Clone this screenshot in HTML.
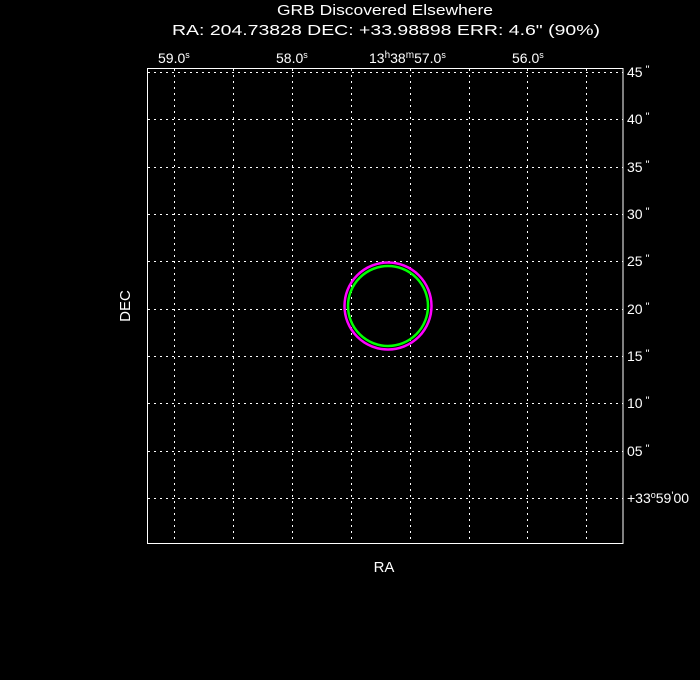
<!DOCTYPE html>
<html><head><style>html,body{margin:0;padding:0;background:#000;}svg{display:block}</style></head>
<body>
<svg width="700" height="680" xmlns="http://www.w3.org/2000/svg" font-family="Liberation Sans, sans-serif" fill="#fff" xml:space="preserve">
<rect width="700" height="680" fill="#000"/>
<text x="385" y="15" font-size="15" text-anchor="middle" textLength="216" lengthAdjust="spacingAndGlyphs">GRB Discovered Elsewhere</text>
<text x="386" y="35" font-size="15" text-anchor="middle" textLength="428" lengthAdjust="spacingAndGlyphs">RA: 204.73828  DEC: +33.98898  ERR: 4.6" (90%)</text>
<g font-size="14">
<text x="158" y="63">59.0<tspan font-size="9" dy="-5">s</tspan></text>
<text x="276" y="63">58.0<tspan font-size="9" dy="-5">s</tspan></text>
<text x="369" y="63">13<tspan font-size="10" dy="-5">h</tspan><tspan dy="5">38</tspan><tspan font-size="10" dy="-5">m</tspan><tspan dy="5">57.0</tspan><tspan font-size="9" dy="-5">s</tspan></text>
<text x="512" y="63">56.0<tspan font-size="9" dy="-5">s</tspan></text>
<text x="627" y="77">45<tspan font-size="11" dy="-4"> "</tspan></text>
<text x="627" y="124">40<tspan font-size="11" dy="-4"> "</tspan></text>
<text x="627" y="172">35<tspan font-size="11" dy="-4"> "</tspan></text>
<text x="627" y="219">30<tspan font-size="11" dy="-4"> "</tspan></text>
<text x="627" y="266">25<tspan font-size="11" dy="-4"> "</tspan></text>
<text x="627" y="314">20<tspan font-size="11" dy="-4"> "</tspan></text>
<text x="627" y="361">15<tspan font-size="11" dy="-4"> "</tspan></text>
<text x="627" y="408">10<tspan font-size="11" dy="-4"> "</tspan></text>
<text x="627" y="456">05<tspan font-size="11" dy="-4"> "</tspan></text>
<text x="627" y="503">+33<tspan font-size="9" dy="-5">o</tspan><tspan dy="5">59</tspan><tspan font-size="11" dy="-4">'</tspan><tspan dy="4">00</tspan></text>
</g>
<text x="384" y="572" font-size="15" text-anchor="middle">RA</text>
<text transform="translate(130,306) rotate(-90)" font-size="15" text-anchor="middle">DEC</text>
<g stroke="#fff" stroke-width="1" stroke-dasharray="2,4">
<line x1="174.5" y1="69" x2="174.5" y2="543"/><line x1="233.5" y1="69" x2="233.5" y2="543"/><line x1="292.5" y1="69" x2="292.5" y2="543"/><line x1="351.5" y1="69" x2="351.5" y2="543"/><line x1="410.5" y1="69" x2="410.5" y2="543"/><line x1="469.5" y1="69" x2="469.5" y2="543"/><line x1="527.5" y1="69" x2="527.5" y2="543"/><line x1="586.5" y1="69" x2="586.5" y2="543"/>
<line x1="148" y1="72.5" x2="623" y2="72.5"/><line x1="148" y1="119.5" x2="623" y2="119.5"/><line x1="148" y1="167.5" x2="623" y2="167.5"/><line x1="148" y1="214.5" x2="623" y2="214.5"/><line x1="148" y1="261.5" x2="623" y2="261.5"/><line x1="148" y1="309.5" x2="623" y2="309.5"/><line x1="148" y1="356.5" x2="623" y2="356.5"/><line x1="148" y1="403.5" x2="623" y2="403.5"/><line x1="148" y1="451.5" x2="623" y2="451.5"/><line x1="148" y1="498.5" x2="623" y2="498.5"/>
</g>
<rect x="147.5" y="68.5" width="475.5" height="475" fill="none" stroke="#fff" stroke-width="1"/>
<circle cx="388" cy="306" r="43.5" fill="none" stroke="#ff00ff" stroke-width="2.5"/>
<circle cx="388" cy="306" r="40" fill="none" stroke="#00ff00" stroke-width="2.5"/>
</svg>
</body></html>
